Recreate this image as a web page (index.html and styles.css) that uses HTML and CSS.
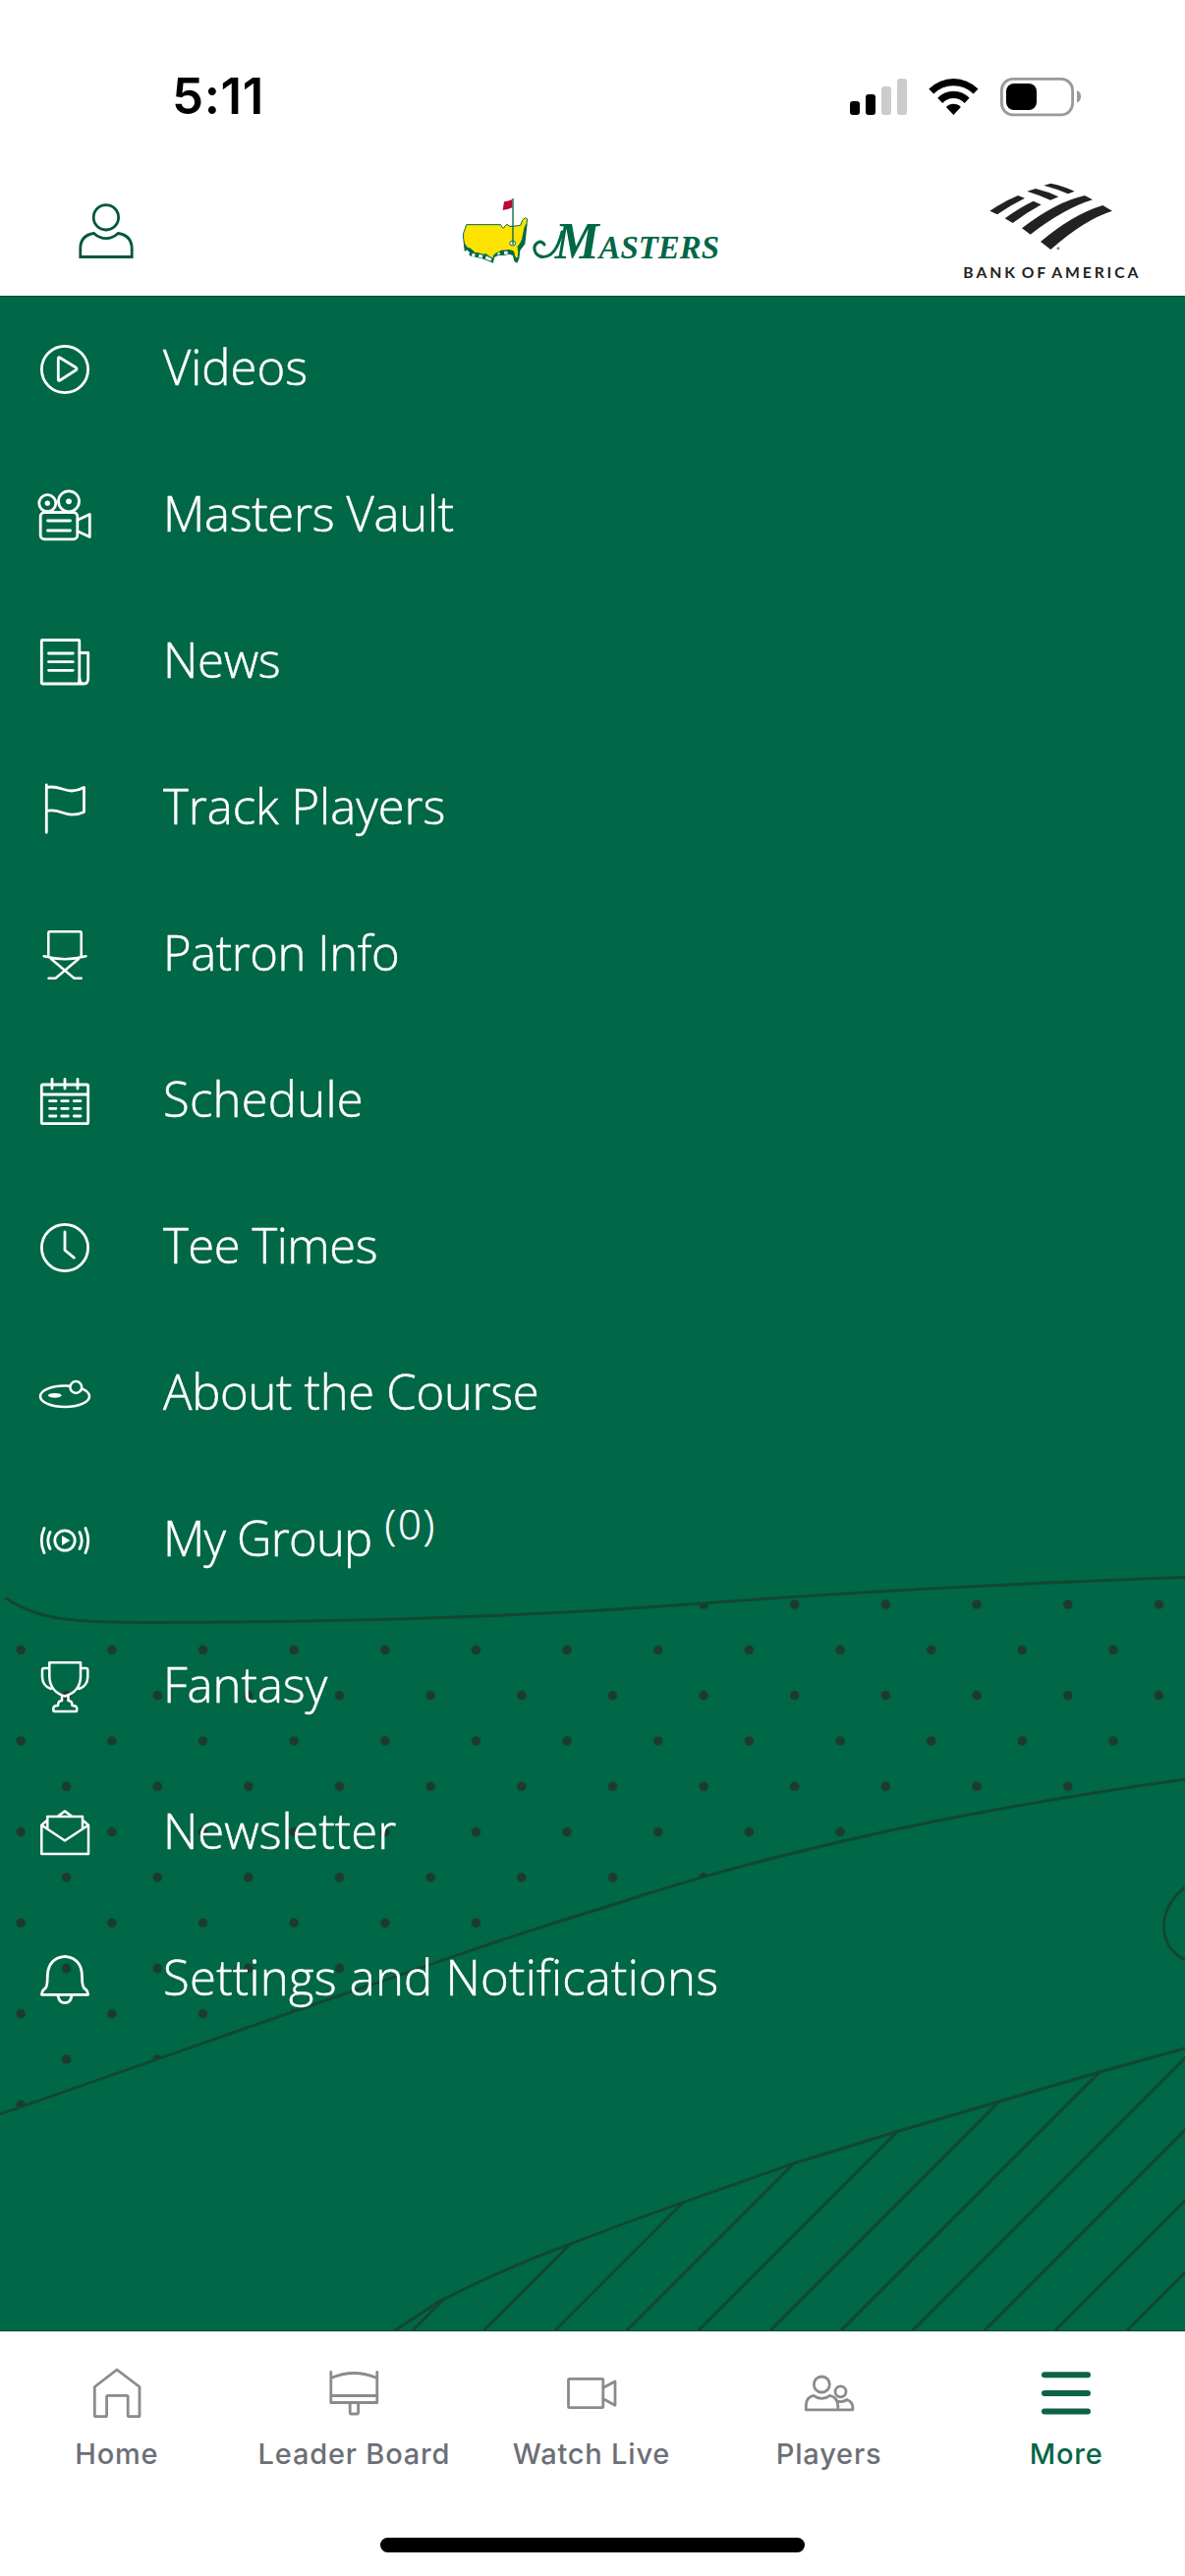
FILE: index.html
```html
<!DOCTYPE html>
<html lang="en">
<head>
    <meta charset="UTF-8">
    <meta name="viewport" content="width=device-width, initial-scale=1.0">
    <title>Masters - More</title>
    <link rel="stylesheet" href="styles.css">
</head>
<body>
    <div class="status-bar">
        <span class="time">5:11</span>
        <svg class="status-icons" viewBox="865 76 236 42">
            <rect x="865" y="102" width="10" height="14" rx="3"/>
            <rect x="881" y="95" width="10" height="21" rx="3"/>
            <rect class="dim" x="897" y="87" width="10" height="29" rx="3"/>
            <rect class="dim" x="913" y="79" width="10" height="37" rx="3"/>
            <path d="M945.3 89.6Q956.5 79 970.4 79Q984.5 79 995.5 89.6L990.6 94.5Q982 86.3 970.4 86.3Q958.8 86.3 950.2 94.5Z"/>
            <path d="M954.2 98.8Q961 91.8 970.4 91.8Q979.8 91.8 986.6 98.8L981.6 103.9Q977 99.1 970.4 99.1Q963.8 99.1 959.2 103.9Z"/>
            <path d="M962.9 108Q966 104.7 970.4 104.7Q974.8 104.7 977.9 108L970.4 116Z"/>
            <rect class="battery-shell" x="1019.4" y="79.4" width="72.2" height="36.4" rx="11.5"/>
            <rect x="1024" y="84" width="31" height="27" rx="8"/>
            <path class="battery-tip" d="M1096 91Q1100 92.5 1100 97.3Q1100 102 1096 103.6Z"/>
        </svg>
    </div>

    <header class="header">
        <svg class="profile-icon" viewBox="80 206.7 56 56">
            <circle cx="107.9" cy="221" r="12.7"/>
            <path d="M81.8 261.2V252Q82.3 239 95.6 237.2Q101 242.3 107.9 242.3Q114.8 242.3 120.2 237.2Q133.5 239 134.2 252V261.2Z"/>
        </svg>

        <svg class="masters-logo" viewBox="90 60 800 210">
            <path class="map-base" d="M95 200L98 225L117 242L150 249L186 263L189 246L201 240L218 240L236 236L246 241L250 258L259 263L265 250L268 225L283 205L290 142L280 150L262 205L238 220L205 226L184 242L150 233L120 222Z"/>
            <path class="map-gaps" d="M102 226L112 235M121 238L130 240M142 240L153 244M163 246L180 253M198 234L206 232M219 232L230 232"/>
            <path class="map" d="M104 146H209Q211 154 217 157Q223 147 228 145Q235 154 246 151Q262 149 269 148Q274 129 283 125L290 129Q289 145 283 152Q277 175 275 190Q270 204 261 213Q266 232 261 248L256 249Q249 243 248 228Q236 221 224 225Q209 223 202 231Q184 235 187 250Q173 245 164 236Q154 240 144 234L130 232Q119 218 106 216Q95 205 95 190Q92 172 100 158Z"/>
            <ellipse class="hole" cx="245" cy="203" rx="9" ry="7"/>
            <path class="pole" d="M246 66V207"/>
            <path class="pin-flag" d="M219 76Q232 75 244 69V94Q234 99 215 102Z"/>
            <path class="swash" d="M342 207Q334 194 321 201Q305 212 316 233Q334 254 361 237Q384 219 396 168"/>
            <text class="wordmark" x="374" y="248" textLength="502" lengthAdjust="spacingAndGlyphs"><tspan class="cap">M</tspan>ASTERS</text>
        </svg>

        <svg class="sponsor" viewBox="480 400 540 310">
            <path d="M727 417L748 411Q790 420 821 435L801 443Q765 427 727 417Z"/>
            <path d="M676 435L702 427Q740 436 772 452L747 462Q712 446 676 435Z"/>
            <path d="M562 495Q605 466 648 448L669 456Q625 477 585 506Z"/>
            <path d="M608 518Q652 485 695 465L719 476Q675 500 632 532Z"/>
            <path d="M660 548Q765 467 852 448L876 461Q790 487 686 567Z"/>
            <path d="M717 589Q815 506 907 478L936 495Q850 522 748 613Z"/>
            <circle class="reg" cx="771" cy="609" r="4.5"/>
            <text x="481" y="699" textLength="534">BANK OF AMERICA</text>
        </svg>
    </header>

    <main class="menu">
        <!-- course map artwork behind the list -->
        <svg class="course-art" viewBox="0 302 1206 2070">
            <defs>
                <pattern id="dots" patternUnits="userSpaceOnUse" x="0" y="1656.2" width="92.65" height="92.6">
                    <circle cx="21.2" cy="23.2" r="4.8"/>
                    <circle cx="67.6" cy="69.5" r="4.8"/>
                </pattern>
                <clipPath id="fairway">
                    <path d="M0 1622C30 1643 60 1652 150 1652C420 1652 580 1640 715 1632C900 1618 1050 1612 1206 1605V1811Q1090 1826 992 1846Q900 1860 808 1886Q710 1910 623 1939Q540 1964 454 1994L300 2047L160 2096L0 2152Z"/>
                </clipPath>
                <clipPath id="rough">
                    <path d="M402 2372Q424 2358 446 2343Q510 2310 583 2283Q640 2261 697 2241L808 2202L915 2169L1017 2139L1119 2109L1206 2085V2372Z"/>
                </clipPath>
            </defs>
            <rect class="dots" y="1590" width="1206" height="600" clip-path="url(#fairway)"/>
            <g class="contours">
                <path d="M5 1626C35 1647 65 1651.5 150 1651.500C420 1651 580 1642 715 1632C900 1618 1050 1611 1206 1605.5"/>
                <path d="M0 2152L160 2096L300 2047L454 1994Q540 1964 623 1939Q710 1910 808 1886Q900 1863 992 1846Q1100 1826 1206 1811"/>
                <path d="M1206 1921Q1184.500 1938 1184.500 1961.500Q1185 1984 1206 1995"/>
                <path d="M402 2372Q424 2358 446 2343Q510 2310 583 2283Q640 2261 697 2241L808 2202L915 2169L1017 2139L1119 2109L1206 2085"/>
                <path clip-path="url(#rough)" d="M420 2372l300-300M492.5 2372l300-300M565 2372l300-300M638 2372l300-300M711 2372l300-300M784 2372l300-300M856 2372l300-300M929 2372l300-300M1002 2372l300-300M1074 2372l300-300M1147 2372l300-300"/>
            </g>
        </svg>

        <ul class="menu-list">
            <li class="menu-item">
                <svg viewBox="0 0 56 56"><circle cx="28" cy="28" r="23.6"/><path d="M21.3 17Q21.3 15 23.2 16.2L39.2 26Q41 27.5 39.2 28.8L23.2 39Q21.3 40.2 21.3 38.2Z"/></svg>
                <span class="label">Videos</span>
            </li>
            <li class="menu-item">
                <svg viewBox="0 0 56 56"><circle cx="10.3" cy="15.2" r="8.5"/><circle cx="32" cy="13.3" r="10.5"/><circle class="solid" cx="10.3" cy="15.2" r="2.6"/><circle class="solid" cx="32" cy="13.3" r="2.9"/><rect x="3.2" y="24.5" width="37.6" height="27.3" rx="4"/><path d="M10.5 33H33.5M10.5 43H33.5M41 32.3L53.3 26.5V49.5L41 43.7"/></svg>
                <span class="label snug">Masters Vault</span>
            </li>
            <li class="menu-item">
                <svg viewBox="0 0 56 56"><rect x="4.3" y="5.5" width="38.5" height="44.5" rx="1"/><path d="M11.5 19H36.3M11.5 27.7H36.3M11.5 36.3H36.3M43 18.5H51.7V44Q51.7 50 47.3 50Q43 50 43 45V50H47"/></svg>
                <span class="label snug">News</span>
            </li>
            <li class="menu-item">
                <svg viewBox="0 0 56 56"><path d="M9.3 4V52.3M9.3 6.5C21 4 26 10 35 10Q42 9.5 47.5 6.5V31.5Q42 34.2 35 34.2C26 34 20 27.5 9.3 30.5"/></svg>
                <span class="label">Track Players</span>
            </li>
            <li class="menu-item">
                <svg viewBox="0 0 56 56" class="thin"><path d="M11.3 30V5.5Q11.3 4.3 12.5 4.3H43.5Q44.7 4.3 44.7 5.5V30M6.7 29.3Q28 35 49.5 29.3M14 32L37.5 51.7H44.7M42 32L18.5 51.7H11.5"/></svg>
                <span class="label tight">Patron Info</span>
            </li>
            <li class="menu-item">
                <svg viewBox="0 0 56 56"><rect x="4.3" y="11" width="47.4" height="39.7" rx="1.5"/><path d="M4.3 21H51.7M15 5.5V15M28 5.5V15M41 5.5V15M12.5 27.7H19M24.7 27.7H31.3M37.3 27.7H44M12.5 35.3H19M24.7 35.3H31.3M37.3 35.3H44M12.5 43H19M24.7 43H31.3M37.3 43H44"/></svg>
                <span class="label loose">Schedule</span>
            </li>
            <li class="menu-item">
                <svg viewBox="0 0 56 56"><circle cx="28" cy="28" r="23.6"/><path d="M28 12V30.5L37.3 38.2"/></svg>
                <span class="label tight">Tee Times</span>
            </li>
            <li class="menu-item">
                <svg viewBox="0 0 56 56" class="thin"><ellipse cx="28" cy="30.2" rx="25" ry="10.8"/><ellipse class="solid" cx="17.8" cy="29.3" rx="6.7" ry="2.4"/><circle class="ball" cx="39.3" cy="21" r="5.9"/></svg>
                <span class="label snug">About the Course</span>
            </li>
            <li class="menu-item">
                <svg viewBox="0 0 56 56"><circle cx="28" cy="28" r="10.2"/><path class="solid" d="M25 23L33.4 28L25 33Z"/><path d="M13 19.5Q8.5 28 13 36.5M7 15.5Q1.5 28 7 40.5M43 19.5Q47.5 28 43 36.5M49 15.5Q54.5 28 49 40.5"/></svg>
                <span class="label tighter">My Group</span><span class="count">(0)</span>
            </li>
            <li class="menu-item">
                <svg viewBox="0 0 56 56" class="thin"><path d="M12.3 3.3H44V18Q43.5 33 28 37.5Q13 33 12.3 18ZM12.3 9H7Q5 9 5 11V18Q5.5 27.5 13.8 30M44 9H49.5Q51.3 9 51.3 11V18Q50.8 27.5 42.5 30M25 37.5V42Q21 42 21 47Q16.3 47 16.3 50V52Q16.3 53 17.5 53H39Q40.2 53 40.2 52V50Q40.2 47 35.5 47Q35.5 42 31.5 42V37.5"/></svg>
                <span class="label">Fantasy</span>
            </li>
            <li class="menu-item">
                <svg viewBox="0 0 56 56" class="thin"><path d="M10.3 14.5L4.3 19.7V49H52V19.7L46 14.5M10.3 23V11H46V23M4.3 19.7L28 35.5L52 19.7M20.5 11L28 5.5L35.5 11"/></svg>
                <span class="label">Newsletter</span>
            </li>
            <li class="menu-item">
                <svg viewBox="0 0 56 56"><path d="M28 4.3Q45.5 6 45.5 25Q45.5 37 49 37.7Q51.8 40 51.5 43.3H4.6Q4.2 40 7 37.7Q10.3 37 10.3 25Q10.5 6 28 4.3ZM21 44Q22 51.7 28 51.7Q34 51.7 35 44"/></svg>
                <span class="label loose">Settings and Notifications</span>
            </li>
        </ul>
    </main>

    <nav class="tab-bar">
        <div class="tab">
            <svg viewBox="0 0 56 56"><path d="M28 4L51 21.5V50.5Q51 51.7 49.8 51.7H40.4Q39.2 51.7 39.2 50.5V31.5Q39.2 30.3 38 30.3H18.8Q17.6 30.3 17.6 31.5V50.5Q17.6 51.7 16.4 51.7H6.5Q5.3 51.7 5.3 50.5V21.5Z"/></svg>
            <span>Home</span>
        </div>
        <div class="tab">
            <svg viewBox="0 0 56 56"><path d="M4.8 6.5V37.5H51.8V6.5M4.8 12.5Q28 2.5 51.8 12.5M4.8 30.5H51.8M24.2 38V48Q24.2 49 25.2 49H31.6Q32.6 49 32.6 48V38"/></svg>
            <span>Leader Board</span>
        </div>
        <div class="tab">
            <svg viewBox="0 0 56 56"><rect x="4.5" y="13.3" width="35.3" height="29.4" rx="1"/><path d="M40 22.3L52 16V40.3L40 33.7"/></svg>
            <span>Watch Live</span>
        </div>
        <div class="tab">
            <svg viewBox="0 0 56 56"><circle cx="20.3" cy="19" r="8"/><circle cx="39.5" cy="26.3" r="5.5"/><path d="M4.3 44.8V40.5Q4.3 32 12 30.3Q20.3 36.5 28.6 30.3Q36.5 32 36.8 40.5V44.8ZM36.8 44.8H51.8V42Q51.5 36.5 46 34.5Q41 38 35 35.5"/></svg>
            <span>Players</span>
        </div>
        <div class="tab active">
            <svg viewBox="0 0 56 56"><path d="M6 9.3H50M6 28H50M6 46.5H50"/></svg>
            <span>More</span>
        </div>
    </nav>
    <div class="home-indicator"></div>
</body>
</html>
```
FILE: styles.css
```css
* {
    box-sizing: border-box;
    margin: 0;
    padding: 0;
}

body {
    width: 1206px;
    height: 2622px;
    background: #fff;
    font-family: "Open Sans", sans-serif;
    overflow: hidden;
}

svg {
    display: block;
}

/* status bar */
.status-bar {
    display: flex;
    justify-content: space-between;
    align-items: center;
    height: 169px;
    padding: 26px 105px 0 175px;
}

.time {
    font-family: Inter, sans-serif;
    font-size: 51px;
    font-weight: 600;
    letter-spacing: 0.6px;
}

.status-icons {
    width: 236px;
    height: 42px;
}

.dim {
    fill: #ccc;
}

.battery-shell {
    fill: none;
    stroke: #999;
    stroke-width: 2.8;
}

.battery-tip {
    fill: #999;
}

/* header */
.header {
    display: grid;
    grid-template-columns: 390px 510px auto;
    align-items: center;
    height: 132px;
    padding: 0 46px 0 80px;
}

.profile-icon {
    width: 56px;
    height: 56px;
    fill: none;
    stroke: #00573d;
    stroke-width: 2.8;
}

.masters-logo {
    width: 266.7px;
    height: 70px;
    overflow: visible;
}

.map {
    fill: #fce300;
    stroke: #006747;
    stroke-width: 3;
}

.map-base {
    fill: #006747;
}

.map-gaps {
    stroke: #fff;
    stroke-width: 9;
}

.hole {
    fill: #fff;
    stroke: #006747;
    stroke-width: 3;
}

.pole {
    stroke: #006747;
    stroke-width: 4;
}

.pin-flag {
    fill: #ba0c2f;
}

.swash {
    fill: none;
    stroke: #006747;
    stroke-width: 9;
    stroke-linecap: round;
}

.wordmark {
    font-family: "Liberation Serif", serif;
    font-size: 103px;
    font-style: italic;
    font-weight: 700;
    fill: #006747;
}

.wordmark .cap {
    font-size: 158px;
}

.sponsor {
    width: 180px;
    height: 103.3px;
    fill: #222;
    overflow: visible;
}

.sponsor text {
    font-family: Lato, sans-serif;
    font-size: 47px;
    font-weight: 700;
    word-spacing: -8px;
}

.reg {
    fill: #888;
}

/* menu */
.menu {
    position: relative;
    height: 2072px;
    background: #006747;
    border-top: 1px solid #00482f;
    border-bottom: 1px solid #00482f;
}

.course-art {
    position: absolute;
    top: 0;
    left: 0;
    width: 1206px;
    height: 2070px;
}

.course-art pattern {
    fill: #1c3b2b;
}

.dots {
    fill: url(#dots);
}

.contours {
    fill: none;
    stroke: #12472f;
    stroke-width: 2.9;
}

.menu-list {
    position: relative;
    margin-top: -1px;
    list-style: none;
}

.menu-item {
    display: flex;
    align-items: center;
    height: 149px;
    padding-left: 38px;
    color: #fff;
    font-size: 49px;
    font-weight: 300;
    white-space: nowrap;
    -webkit-text-stroke: 0.5px #fff;
}

.menu-item svg {
    width: 56px;
    height: 56px;
    margin-right: 72px;
    fill: none;
    stroke: #fff;
    stroke-width: 2.8;
    stroke-linecap: round;
    stroke-linejoin: round;
}

.menu-item svg.thin {
    stroke-width: 2.5;
}

.menu-item .solid {
    fill: #fff;
    stroke: none;
}

.menu-item .ball {
    fill: #006747;
}

.label {
    padding-bottom: 5px;
}

.snug {
    letter-spacing: -0.3px;
}

.tight {
    letter-spacing: -0.45px;
}

.tighter {
    letter-spacing: -0.8px;
}

.loose {
    letter-spacing: 0.25px;
}

.count {
    margin: -35px 0 0 13px;
    font-size: 42px;
    letter-spacing: 2px;
}

/* tab bar */
.tab-bar {
    display: grid;
    grid-template-columns: repeat(5, 1fr);
    width: 1208px;
    height: 210px;
    margin-left: -2px;
    padding-top: 35px;
}

.tab {
    display: flex;
    flex-direction: column;
    align-items: center;
    gap: 16px;
    color: #6c6f76;
    font-family: Inter, sans-serif;
    font-size: 29px;
    font-weight: 500;
    letter-spacing: 0.8px;
    white-space: nowrap;
}

.tab svg {
    width: 56px;
    height: 56px;
    fill: none;
    stroke: #8b8b8b;
    stroke-width: 2.8;
    stroke-linejoin: round;
    stroke-linecap: round;
}

.tab.active {
    color: #0a6446;
}

.tab.active svg {
    stroke: #0a6446;
    stroke-width: 6;
}

.home-indicator {
    width: 432px;
    height: 15px;
    margin: 0 auto;
    background: #000;
    border-radius: 7.5px;
}
```
